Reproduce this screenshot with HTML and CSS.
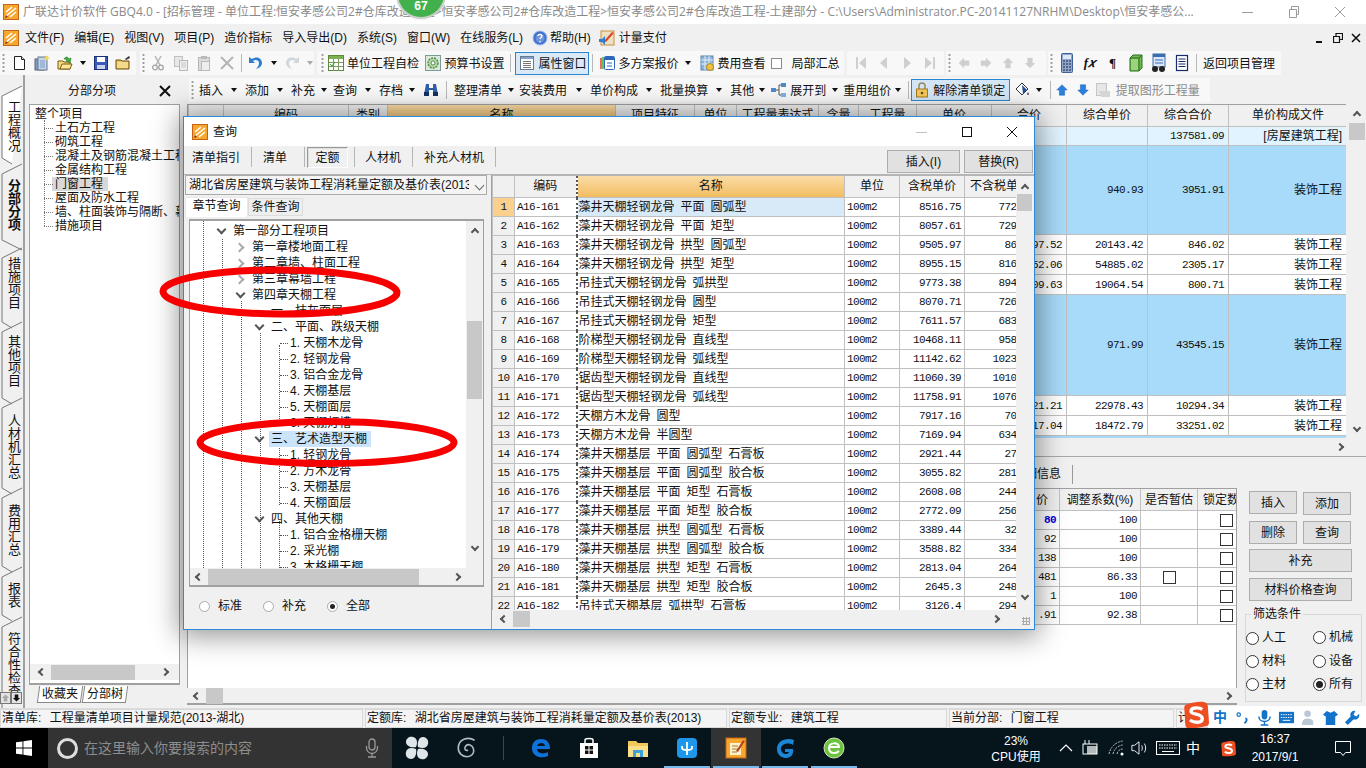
FILE: index.html
```html
<!DOCTYPE html>
<html lang="zh-CN">
<head>
<meta charset="utf-8">
<title>广联达计价软件 GBQ4.0</title>
<link rel="stylesheet" href="styles.css">
</head>
<body>
<svg class="defs" width="0" height="0">
<defs>
<symbol id="logo" viewBox="0 0 16 16"><rect x=".5" y=".5" width="15" height="15" fill="#f7a72c" stroke="#c4641a"/><path d="M3 12 13 4M3 8l6-5M7 13l6-5" stroke="#fff" stroke-width="1.6"/><path d="M2 14l3-1-2-2z" fill="#8a2b12"/></symbol>
<symbol id="doc" viewBox="0 0 16 16"><path d="M3.500 1.500h7l3 3v10h-10z" fill="#fff" stroke="#222"/><path d="M10.500 1.500v3h3" fill="#ddd" stroke="#222"/></symbol>
<symbol id="docs" viewBox="0 0 16 16"><rect x="1" y="4" width="9" height="11" fill="#7f9cc7" stroke="#567"/><rect x="4" y="2" width="9" height="13" fill="#c5d4ea" stroke="#678"/><path d="M6 6h5M6 8h5M6 10h5M6 12h5" stroke="#7f9cc7"/><path d="M13 0l1 2 2 1-2 1-1 2-1-2-2-1 2-1z" fill="#f5d94a"/></symbol>
<symbol id="openf" viewBox="0 0 16 16"><path d="M1 6h5l1 1h6v7H1z" fill="#f7dc7f" stroke="#7a5a10"/><path d="M3 14l2-5h10l-2 5z" fill="#fbe89f" stroke="#7a5a10"/><path d="M7 4c2-3 4-2 5 0l2-1-1 5-4-2 1-1c-1-1-2-1-3-1z" fill="#3fae3c" stroke="#1d7a1c" stroke-width=".6"/></symbol>
<symbol id="save" viewBox="0 0 16 16"><rect x="1.500" y="1.500" width="13" height="13" fill="#3b5bb8" stroke="#1b2f78"/><rect x="4" y="2" width="8" height="5" fill="#fff"/><rect x="4" y="10" width="8" height="4" fill="#c9d2ea"/></symbol>
<symbol id="fold" viewBox="0 0 16 16"><path d="M1 5h5l1 1h7v8H1z" fill="#e9c560" stroke="#6a4d10"/><rect x="2" y="7" width="11" height="6" fill="#f4db8b"/><path d="M10 4l4-3 1 2-4 2z" fill="#333"/></symbol>
<symbol id="cut" viewBox="0 0 16 16"><path d="M5 1l5 9M11 1L6 10" stroke="#b5b5b5" stroke-width="1.500"/><circle cx="5" cy="12.500" r="2.300" fill="none" stroke="#a5a5a5" stroke-width="1.300"/><circle cx="11" cy="12.500" r="2.300" fill="none" stroke="#a5a5a5" stroke-width="1.300"/></symbol>
<symbol id="copy" viewBox="0 0 16 16"><rect x="1.500" y="1.500" width="8" height="10" fill="#e8e8e8" stroke="#c0c0c0"/><rect x="6.500" y="5.500" width="8" height="10" fill="#eee" stroke="#b8b8b8"/><path d="M8 8h5M8 10h5M8 12h5" stroke="#c8c8c8"/></symbol>
<symbol id="paste" viewBox="0 0 16 16"><rect x="2.500" y="2.500" width="11" height="13" fill="#ddd" stroke="#b5b5b5"/><rect x="5" y="1" width="6" height="3" fill="#bbb"/><rect x="5.500" y="6.500" width="8" height="9" fill="#eee" stroke="#bbb"/></symbol>
<symbol id="del" viewBox="0 0 16 16"><path d="M2 2l12 12M14 2L2 14" stroke="#b5b5b5" stroke-width="2"/></symbol>
<symbol id="undo" viewBox="0 0 16 16"><path d="M1 2v6h6L5 6c2-2 6-1 6 2 0 2-1 4-3 6 4-1 6-4 6-6 0-5-6-7-10-4z" fill="#2f7dd1"/></symbol>
<symbol id="redo" viewBox="0 0 16 16"><path d="M15 2v6H9l2-2C9 4 5 5 5 8c0 2 1 4 3 6-4-1-6-4-6-6 0-5 6-7 10-4z" fill="#cfd6dc"/></symbol>
<symbol id="tbl" viewBox="0 0 16 16"><rect x=".5" y=".5" width="15" height="15" fill="#fff" stroke="#5c8a3c"/><rect x="1" y="1" width="14" height="3" fill="#7cb050"/><path d="M1 7.500h14M1 11.500h14M5.500 4v12M10.500 4v12" stroke="#7a9a62"/><path d="M2 9l2 2 3-4" stroke="#2a9a2a" fill="none"/></symbol>
<symbol id="gear" viewBox="0 0 16 16"><rect x=".5" y=".5" width="15" height="15" fill="#dfe9d8" stroke="#7a9a9a"/><circle cx="8" cy="8" r="5" fill="#b6d79f" stroke="#4f8c5c" stroke-dasharray="2 1" stroke-width="1.500"/><circle cx="8" cy="8" r="2" fill="#fff" stroke="#4f8c5c"/></symbol>
<symbol id="prop" viewBox="0 0 16 16"><rect x="1.500" y="1.500" width="13" height="13" fill="#fff" stroke="#6a7a8a"/><rect x="2" y="2" width="12" height="2" fill="#7ea3cf"/><path d="M4 6.500h8M4 8.500h8M4 10.500h8M4 12.500h8" stroke="#777"/></symbol>
<symbol id="multi" viewBox="0 0 16 16"><rect x="1" y="3" width="8" height="11" fill="#e86b5e"/><rect x="3" y="2" width="8" height="12" fill="#6cbf62"/><rect x="5.500" y="1.500" width="10" height="13" rx="1" fill="#fff" stroke="#2d67bd"/><rect x="6" y="2" width="9" height="3" fill="#2d67bd"/><path d="M8 8h5M8 11h5" stroke="#2d67bd"/></symbol>
<symbol id="fee" viewBox="0 0 16 16"><rect x="2" y="1" width="12" height="14" fill="#8fb7dd" stroke="#5a82ad"/><path d="M2 5h12M2 9h12M6 1v14M10 1v14" stroke="#e2edf7"/><circle cx="11" cy="12" r="3.500" fill="#f0c040" stroke="#b08a20"/></symbol>
<symbol id="first" viewBox="0 0 16 16"><path d="M3 2h2v12H3zM13 2v12L6 8z" fill="#cfcfcf"/></symbol>
<symbol id="prev" viewBox="0 0 16 16"><path d="M11 2v12L4 8z" fill="#cfcfcf"/></symbol>
<symbol id="next" viewBox="0 0 16 16"><path d="M5 2v12l7-6z" fill="#cfcfcf"/></symbol>
<symbol id="last" viewBox="0 0 16 16"><path d="M11 2h2v12h-2zM3 2v12l7-6z" fill="#cfcfcf"/></symbol>
<symbol id="al" viewBox="0 0 16 16"><path d="M2 8l6-6v3h6v6H8v3z" fill="#cfcfcf"/></symbol>
<symbol id="ar" viewBox="0 0 16 16"><path d="M14 8L8 2v3H2v6h6v3z" fill="#cfcfcf"/></symbol>
<symbol id="au" viewBox="0 0 16 16"><path d="M8 2l6 6h-3v6H5V8H2z" fill="#cfcfcf"/></symbol>
<symbol id="ad" viewBox="0 0 16 16"><path d="M8 14l6-6h-3V2H5v6H2z" fill="#cfcfcf"/></symbol>
<symbol id="calc" viewBox="0 0 16 20"><rect x="2.500" y=".5" width="11" height="19" rx="1" fill="#8ea8d2" stroke="#3f5f96"/><rect x="4" y="2" width="8" height="4" fill="#dfe8f5"/><path d="M4 8h2M7 8h2M10 8h2M4 11h2M7 11h2M10 11h2M4 14h2M7 14h2M10 14h2M4 17h2M7 17h2M10 17h2" stroke="#223"/></symbol>
<symbol id="box" viewBox="0 0 16 20"><path d="M2 5l3-3h9v13l-3 3H2z" fill="#6fbb4f" stroke="#2c6d24"/><path d="M2 5h9v13M11 5l3-3" stroke="#2c6d24" fill="none"/><path d="M3 6h7v11H3z" fill="#9ed37e"/></symbol>
<symbol id="pic" viewBox="0 0 16 20"><rect x="2" y="1" width="12" height="13" fill="#dce6f5" stroke="#3b6cb0"/><rect x="2" y="1" width="12" height="3" fill="#3b6cb0"/><path d="M4 7h8M4 10h8" stroke="#3b6cb0"/><circle cx="4" cy="16" r="3" fill="#222"/><circle cx="11" cy="16" r="3" fill="#222"/></symbol>
<symbol id="list" viewBox="0 0 16 20"><rect x="2.500" y="2.500" width="11" height="15" fill="#fff" stroke="#1a2a6a" stroke-width="1.200"/><path d="M4.500 6h7M4.500 8.500h7M4.500 11h7M4.500 13.500h7" stroke="#1a2a6a"/></symbol>
<symbol id="bin" viewBox="0 0 16 16"><path d="M3 2h3v4h4V2h3l2 11H10V8H6v5H1z" fill="#2e5fa8"/><rect x="1" y="10" width="5" height="4" fill="#14305f"/><rect x="10" y="10" width="5" height="4" fill="#14305f"/></symbol>
<symbol id="tree" viewBox="0 0 16 16"><rect x="0" y="6" width="5" height="4" fill="#4b8bd0"/><rect x="10" y="1" width="5" height="4" fill="#4b8bd0"/><rect x="10" y="11" width="5" height="4" fill="#7db2e4"/><path d="M5 8h3M8 3v10M8 3h2M8 13h2" stroke="#555" fill="none"/></symbol>
<symbol id="lock" viewBox="0 0 16 16"><path d="M5 7V4a3 3 0 0 1 6 0v3" fill="none" stroke="#9a8a60" stroke-width="1.500"/><rect x="2.500" y="7" width="11" height="8" fill="#f4c95c" stroke="#a87a20"/><circle cx="8" cy="11" r="1.300" fill="#6a4a10"/></symbol>
<symbol id="paint" viewBox="0 0 16 16"><path d="M2 7l6-6 6 6-6 6z" fill="#fff" stroke="#333"/><path d="M8 3l5 5-4 4z" fill="#1f4f9f"/><path d="M14 10c1 2 1 3 0 3s-1-1 0-3z" fill="#222"/></symbol>
<symbol id="up" viewBox="0 0 16 16"><path d="M8 2l6 6h-3v6H5V8H2z" fill="#2a7fe0" stroke="#175a9f" stroke-width=".5"/></symbol>
<symbol id="dn" viewBox="0 0 16 16"><path d="M8 14l6-6h-3V2H5v6H2z" fill="#2a7fe0" stroke="#175a9f" stroke-width=".5"/></symbol>
<symbol id="ext" viewBox="0 0 16 16"><rect x="1.500" y="1.500" width="10" height="12" fill="#e6e6e6" stroke="#c5c5c5"/><path d="M4 9h11v6H6z" fill="#d5d5d5"/></symbol>
<symbol id="help" viewBox="0 0 16 16"><circle cx="8" cy="8" r="7" fill="#3f6fd0" stroke="#9db8ea"/><circle cx="8" cy="8" r="4.500" fill="#fff" opacity=".25"/><path d="M6 6c0-2 4-2 4 0 0 1.500-2 1.500-2 3M8 11v1.500" stroke="#fff" fill="none" stroke-width="1.300"/></symbol>
<symbol id="pay" viewBox="0 0 16 16"><rect x="2" y="1" width="13" height="14" fill="#f0e0c0" stroke="#c78f3c"/><path d="M5 11l8-9 2 1-8 9z" fill="#d9442e"/><path d="M0 9h3l3-3v9l-3-3H0z" fill="#2f7dd1"/></symbol>
<symbol id="win" viewBox="0 0 16 16"><path d="M0 2.300l6.500-.9v6.200H0zM7.400 1.300L16 0v7.600H7.400zM0 8.400h6.500v6.200L0 13.700zM7.400 8.400H16V16l-8.600-1.200z" fill="#fff"/></symbol>
<symbol id="sog" viewBox="0 0 24 24"><path d="M4 3C10 1 16 0 20 1c2 .5 3 2 3 4l1 14c0 2-1 3-3 3.500-6 1.500-11 2-15 1.500-2 0-3-1-3-3L2 6c0-1.500.5-2.500 2-3z" fill="#ee4f22"/><path d="M18 7.500c-3-2-10-2-10 1.500s10 2 10 6.500-7 4-11 1.500" fill="none" stroke="#fff" stroke-width="3"/></symbol>
</defs>
</svg>

<div class="app">
  <header class="titlebar">
    <svg class="i16 ml-tl"><use href="#logo"/></svg>
    <span class="title-text">广联达计价软件 GBQ4.0 - [招标管理 - 单位工程:恒安孝感公司2#仓库改造工程&gt;恒安孝感公司2#仓库改造工程&gt;恒安孝感公司2#仓库改造工程-土建部分 - C:\Users\Administrator.PC-20141127NRHM\Desktop\恒安孝感公...</span>
    <span class="winbtns">
      <svg class="wb" viewBox="0 0 12 12"><path d="M0 6.500h11" stroke="#9a9a9a"/></svg>
      <svg class="wb" viewBox="0 0 12 12"><path d="M1.500 3.500h7v8h-7zM3.500 3V.5h7v8H9" fill="none" stroke="#9a9a9a"/></svg>
      <svg class="wb" viewBox="0 0 12 12"><path d="M1 1l10 10M11 1L1 11" stroke="#9a9a9a"/></svg>
    </span>
  </header>
  <div class="badge">67</div>

  <nav class="menubar">
    <svg class="i16 ml-tl"><use href="#logo"/></svg>
    <span class="mi first">文件(F)</span><span class="mi">编辑(E)</span><span class="mi">视图(V)</span><span class="mi">项目(P)</span><span class="mi">造价指标</span><span class="mi">导入导出(D)</span><span class="mi">系统(S)</span><span class="mi">窗口(W)</span><span class="mi">在线服务(L)</span>
    <svg class="i16 mi-ic"><use href="#help"/></svg><span class="mi tight">帮助(H)</span>
    <svg class="i16 mi-ic2"><use href="#pay"/></svg><span class="mi tight2">计量支付</span>
    <span class="mdi">
      <svg class="mb" viewBox="0 0 10 10"><path d="M1 9h6" stroke="#111" stroke-width="2"/></svg>
      <svg class="mb" viewBox="0 0 10 10"><path d="M.5 3.500h6v6h-6zM3 3V.5h6.500v6H7" fill="none" stroke="#111" stroke-width="1.200"/></svg>
      <svg class="mb" viewBox="0 0 10 10"><path d="M1 1l8 8M9 1L1 9" stroke="#111" stroke-width="1.600"/></svg>
    </span>
  </nav>

  <div class="toolbar">
    <div class="grp g1">
      <span class="grip"></span>
      <svg class="i16 s23"><use href="#doc"/></svg><svg class="i16 s23"><use href="#docs"/></svg><svg class="i16 s23"><use href="#openf"/></svg><span class="caret c14"></span><svg class="i16 s22"><use href="#save"/></svg><svg class="i16 s22"><use href="#fold"/></svg>
    </div>
    <div class="grp g2">
      <span class="grip"></span>
      <svg class="i16 s22"><use href="#cut"/></svg><svg class="i16 s23"><use href="#copy"/></svg><svg class="i16 s23"><use href="#paste"/></svg><svg class="i16 s23"><use href="#del"/></svg><span class="sep"></span><svg class="i16 s22"><use href="#undo"/></svg><span class="caret c14"></span><svg class="i16 s22"><use href="#redo"/></svg><span class="caret c14 dim"></span>
    </div>
    <div class="grp g3">
      <span class="grip"></span>
      <svg class="i16 s19"><use href="#tbl"/></svg><span class="ti ml2">单位工程自检</span>
      <svg class="i16 s19 ml6"><use href="#gear"/></svg><span class="ti ml2">预算书设置</span>
      <span class="sep sepa"></span>
      <span class="hot prop"><svg class="i16"><use href="#prop"/></svg><span class="ti">属性窗口</span></span>
      <span class="sep sepx"></span>
      <svg class="i16 s19"><use href="#multi"/></svg><span class="ti ml2">多方案报价</span><span class="caret c19"></span>
      <svg class="i16 s16"><use href="#fee"/></svg><span class="ti ml2">费用查看</span><span class="chk"></span><span class="ti ml10">局部汇总</span>
    </div>
    <div class="grp g4">
      <svg class="i16 s23"><use href="#first"/></svg><svg class="i16 s23"><use href="#prev"/></svg><svg class="i16 s23"><use href="#next"/></svg><svg class="i16 s23"><use href="#last"/></svg>
    </div>
    <div class="grp g5">
      <span class="grip"></span>
      <svg class="i14 s22"><use href="#al"/></svg><svg class="i14 s22"><use href="#ar"/></svg><svg class="i14 s22"><use href="#au"/></svg><svg class="i14 s22"><use href="#ad"/></svg>
    </div>
    <div class="grp g6">
      <span class="grip"></span>
      <svg class="i20 s23"><use href="#calc"/></svg><span class="fx s23">f𝑥</span><span class="pil s23">¶</span><svg class="i20 s23"><use href="#box"/></svg><svg class="i20 s23"><use href="#pic"/></svg><svg class="i20 s23"><use href="#list"/></svg>
      <span class="sep"></span><span class="ti ml3">返回项目管理</span>
    </div>
  </div>

  <div class="work">
    <aside class="rail">
      <svg class="rail-lines" viewBox="0 0 25 633" width="25" height="633">
        <path d="M24 0V633" stroke="#a0a0a0" stroke-width="2"/>
        <path d="M22 11 2 21V83l10 6" fill="#fff" stroke="#777"/>
        <path d="M22 89 2 99V165l20 10" fill="#f0f0f0" stroke="#777"/>
        <path d="M22 173 2 183V247l10 6M22 247 2 257V323l10 6M22 323 2 333V413l10 6M22 413 2 423V491l10 6M22 492 2 502V540l10 6M22 542 2 552V633" fill="none" stroke="#777"/>
      </svg>
      <div class="rt t1">工程概况</div>
      <div class="rt t2 on">分部分项</div>
      <div class="rt t3">措施项目</div>
      <div class="rt t4">其他项目</div>
      <div class="rt t5">人材机汇总</div>
      <div class="rt t6">费用汇总</div>
      <div class="rt t7">报表</div>
      <div class="rt t8">符合性检查</div>
      <div class="railbtns"><span class="rb"><svg viewBox="0 0 10 10"><path d="M5 1l4 4H7v4H3V5H1z" fill="#a8a8a8"/></svg></span><span class="rb"><svg viewBox="0 0 10 10"><path d="M5 9l4-4H7V1H3v4H1z" fill="#111"/></svg></span></div>
    </aside>

    <section class="leftpane">
      <div class="lp-head"><span class="lp-title">分部分项</span><svg class="lp-x" viewBox="0 0 12 12"><path d="M1 1l10 10M11 1L1 11" stroke="#111" stroke-width="2"/></svg></div>
      <div class="lp-tree">
        <ul class="ltree">
          <li class="root">整个项目</li>
          <li>土石方工程</li><li>砌筑工程</li><li>混凝土及钢筋混凝土工程</li><li>金属结构工程</li><li><span class="sel">门窗工程</span></li><li>屋面及防水工程</li><li>墙、柱面装饰与隔断、幕墙工程</li><li>措施项目</li>
        </ul>
        <div class="hs lp-hs"><i class="ar-l"></i><b class="th84"></b><i class="ar-r"></i></div>
      </div>
      <div class="lp-tabs"><span class="lt">收藏夹</span><span class="lt">分部树</span></div>
    </section>

    <section class="rightpane">
      <div class="toolbar2">
        <span class="grip"></span>
        <span class="ti ml3">插入</span><span class="caret c22"></span><span class="ti">添加</span><span class="caret c22"></span><span class="ti">补充</span><span class="caret c18"></span><span class="ti">查询</span><span class="caret c22"></span><span class="ti">存档</span><span class="caret c18"></span><svg class="i16 ml2"><use href="#bin"/></svg><span class="sep sep8"></span>
        <span class="ti">整理清单</span><span class="caret c17"></span><span class="ti">安装费用</span><span class="caret c23"></span><span class="ti">单价构成</span><span class="caret c22"></span><span class="ti">批量换算</span><span class="caret c22"></span><span class="ti">其他</span><span class="caret c15"></span>
        <svg class="i16 ml2"><use href="#tree"/></svg><span class="ti ml3">展开到</span><span class="caret c17"></span><span class="ti">重用组价</span><span class="caret c14"></span><span class="sep sep2"></span>
        <span class="hot lockb"><svg class="i16"><use href="#lock"/></svg><span class="ti">解除清单锁定</span></span>
        <svg class="i16 ml4"><use href="#paint"/></svg><span class="caret c18"></span><span class="sep sep3"></span>
        <svg class="i14 s21 ml4"><use href="#up"/></svg><svg class="i14 s21"><use href="#dn"/></svg><svg class="i16 s22 ml1"><use href="#ext"/></svg><span class="ti dimt ml2">提取图形工程量</span>
      </div>

      <div class="gridwrap">
        <div class="maingrid">
          <table class="mt">
            <colgroup><col class="m1"><col class="m2"><col class="m3"><col class="m4"><col class="m5"><col class="m6"><col class="m7"><col class="m8"><col class="m9"><col class="m10"><col class="m11"><col class="m12"><col class="m13"><col class="m14"></colgroup>
            <thead><tr class="h21"><th></th><th>编码</th><th>类别</th><th class="orange">名称</th><th>项目特征</th><th>单位</th><th>工程量表达式</th><th>含量</th><th>工程量</th><th>单价</th><th>合价</th><th>综合单价</th><th>综合合价</th><th>单价构成文件</th></tr></thead>
            <tbody>
              <tr class="h19 pale"><td colspan="11"></td><td></td><td class="n">137581.09</td><td class="r">[房屋建筑工程]</td></tr>
              <tr class="h89 blue"><td colspan="11"></td><td class="n">940.93</td><td class="n">3951.91</td><td class="r">装饰工程</td></tr>
              <tr class="h20"><td colspan="10"></td><td class="n">97.52</td><td class="n">20143.42</td><td class="n">846.02</td><td class="r">装饰工程</td></tr>
              <tr class="h20"><td colspan="10"></td><td class="n">52.06</td><td class="n">54885.02</td><td class="n">2305.17</td><td class="r">装饰工程</td></tr>
              <tr class="h20"><td colspan="10"></td><td class="n">09.63</td><td class="n">19064.54</td><td class="n">800.71</td><td class="r">装饰工程</td></tr>
              <tr class="h101 blue"><td colspan="11"></td><td class="n">971.99</td><td class="n">43545.15</td><td class="r">装饰工程</td></tr>
              <tr class="h20"><td colspan="10"></td><td class="n">21.21</td><td class="n">22978.43</td><td class="n">10294.34</td><td class="r">装饰工程</td></tr>
              <tr class="h20"><td colspan="10"></td><td class="n">17.04</td><td class="n">18472.79</td><td class="n">33251.02</td><td class="r">装饰工程</td></tr>
              <tr class="h20 blue"><td colspan="14"></td></tr>
            </tbody>
          </table>
        </div>
        <div class="vs main-vs"><i class="ar-u"></i><b class="thv17"></b><i class="ar-d"></i></div>
      </div>
      <div class="hs main-hs"><i class="ar-r"></i></div>

      <div class="lower">
        <div class="lower-left">
          <div class="ltabs"><span class="ltab">明细信息</span></div>
          <div class="ltable">
            <table class="lt-t">
              <colgroup><col class="l1"><col class="l2"><col class="l3"><col class="l4"><col class="l5"></colgroup>
              <thead><tr><th></th><th class="ralign">价</th><th>调整系数(%)</th><th>是否暂估</th><th class="clipth">锁定数量</th></tr></thead>
              <tbody>
                <tr><td></td><td class="n bl">80</td><td class="n">100</td><td></td><td class="cc"><span class="cb"></span></td></tr>
                <tr><td></td><td class="n">92</td><td class="n">100</td><td></td><td class="cc"><span class="cb"></span></td></tr>
                <tr><td></td><td class="n">138</td><td class="n">100</td><td></td><td class="cc"><span class="cb"></span></td></tr>
                <tr><td></td><td class="n">481</td><td class="n">86.33</td><td class="cm"><span class="cb"></span></td><td class="cc"><span class="cb"></span></td></tr>
                <tr><td></td><td class="n">1</td><td class="n">100</td><td></td><td class="cc"><span class="cb"></span></td></tr>
                <tr><td></td><td class="n">.91</td><td class="n">92.38</td><td></td><td class="cc"><span class="cb"></span></td></tr>
              </tbody>
            </table>
          </div>
          <div class="hs low-hs"><i class="ar-l"></i><b class="th17"></b><i class="ar-r"></i></div>
        </div>
        <div class="side">
          <div class="brow b1"><button class="btn w48">插入</button><button class="btn w48 dn1">添加</button></div>
          <div class="brow b2"><button class="btn w48">删除</button><button class="btn w48">查询</button></div>
          <button class="btn wide b3">补充</button>
          <button class="btn wide b4">材料价格查询</button>
          <fieldset class="filter">
            <legend>筛选条件</legend>
            <label class="rd"><span class="radio"></span>人工</label><label class="rd up1"><span class="radio"></span>机械</label>
            <label class="rd"><span class="radio"></span>材料</label><label class="rd"><span class="radio"></span>设备</label>
            <label class="rd"><span class="radio"></span>主材</label><label class="rd"><span class="radio on"></span>所有</label>
          </fieldset>
        </div>
      </div>
    </section>
  </div>

  <footer class="statusbar">
    <span class="sc s1">清单库: 工程量清单项目计量规范(2013-湖北)</span>
    <span class="sc s2">定额库: 湖北省房屋建筑与装饰工程消耗量定额及基价表(2013)</span>
    <span class="sc s3">定额专业: 建筑工程</span>
    <span class="sc s4">当前分部: 门窗工程</span>
    <span class="sc s5">计</span>
  </footer>

  <div class="taskbar">
    <span class="start"><svg class="i16"><use href="#win"/></svg></span>
    <span class="search">
      <span class="cortana"></span>
      <span class="search-text">在这里输入你要搜索的内容</span>
      <svg class="mic" viewBox="0 0 14 20"><rect x="4" y="1" width="6" height="11" rx="3" fill="none" stroke="#999" stroke-width="1.300"/><path d="M1.500 8v2a5.500 5.500 0 0 0 11 0V8M7 16v3M3 19h8" fill="none" stroke="#999" stroke-width="1.300"/></svg>
    </span>
    <span class="tk tk-a"><svg viewBox="0 0 24 24" class="i22"><g fill="#dfe6ea"><path d="M11 11C6 12 1 10 1 6c0-4 4-6 7-5 4 1 5 5 3 10z"/><path d="M13 11c-1-5 1-10 5-10 4 0 6 4 5 7-1 4-5 5-10 3z"/><path d="M13 13c5-1 10 1 10 5 0 4-4 6-7 5-4-1-5-5-3-10z"/><path d="M11 13c1 5-1 10-5 10-4 0-6-4-5-7 1-4 5-5 10-3z"/></g></svg></span>
    <span class="tk tk-a"><svg viewBox="0 0 22 22" class="i22"><path d="M18 4C12 0 3 3 3 11c0 5 4 8 8 8s7-3 6-7-5-5-7-3-1 5 2 4" fill="none" stroke="#b5bcc0" stroke-width="1.500"/></svg></span>
    <span class="tsep"></span>
    <span class="tk"><svg viewBox="0 0 22 22" class="i24"><path d="M3 11C3 5 7 2 12 2c6 0 9 4 9 10H8c0 4 6 6 11 3v4c-7 3-16 1-16-8zm5-2h8c0-4-7-4-8 0z" fill="#0d72d9"/></svg></span>
    <span class="tk"><svg viewBox="0 0 22 22" class="i24"><path d="M2 6h18v15H2z" fill="#fff"/><path d="M7 6V3c0-2 8-2 8 0v3" fill="none" stroke="#fff" stroke-width="1.500"/><path d="M7 9h3.500v3.500H7zM11.500 9H15v3.500h-3.500zM7 13.500h3.500V17H7zM11.500 13.500H15V17h-3.500z" fill="#111"/></svg></span>
    <span class="tk"><svg viewBox="0 0 22 22" class="i24"><path d="M1 4h8l2 2h10v14H1z" fill="#f1c75a"/><path d="M1 9h20v11H1z" fill="#fbe08a"/><path d="M6 13h10v7H6z" fill="#3aa2dd"/><path d="M9 16h4v4H9z" fill="#fbe08a"/></svg></span>
    <span class="tk run"><svg viewBox="0 0 22 22" class="i24"><rect x="1" y="1" width="20" height="20" rx="4" fill="#1e96ea"/><path d="M11 5v13M6 9v2c0 2 2 2 5 2s5 0 5-2V9M6 9h.1M16 9h.1" stroke="#fff" fill="none" stroke-width="1.800"/></svg></span>
    <span class="tk run act"><svg viewBox="0 0 22 22" class="i24"><rect x="1" y="1" width="20" height="20" fill="#f7a72c" stroke="#c4641a"/><rect x="5" y="6" width="11" height="12" fill="#fdf1cf"/><path d="M7 9h6M7 12h6M7 15h5" stroke="#a87a20"/><path d="M11 14l7-11 2 1-7 11z" fill="#b8471e"/></svg></span>
    <span class="tk run"><svg viewBox="0 0 22 22" class="i24"><path d="M20 3c-7-3-17 0-17 9 0 7 6 9 9 9 5 0 8-4 7-9h-8v3h4c-1 3-7 3-8-2-1-6 7-8 12-5z" fill="#1c86d6"/></svg></span>
    <span class="tk run"><svg viewBox="0 0 22 22" class="i24"><circle cx="11" cy="11" r="10" fill="#6cc33f" stroke="#cfe9b8"/><path d="M6 10h10c0-5-10-5-10 1s7 6 10 3" fill="none" stroke="#fff" stroke-width="2"/></svg></span>
    <span class="cpu"><span>23%</span><span>CPU使用</span></span>
    <span class="tray">
      <svg class="tr1" viewBox="0 0 14 10"><path d="M1 8l6-6 6 6" fill="none" stroke="#fff" stroke-width="1.200"/></svg>
      <svg class="tr2" viewBox="0 0 18 16"><rect x="2" y="4" width="14" height="10" fill="none" stroke="#fff"/><rect x="6" y="6" width="10" height="8" fill="#fff" opacity=".7"/><path d="M4 0v4M8 0v4" stroke="#fff"/></svg>
      <svg class="tr3" viewBox="0 0 18 16"><path d="M1 14a16 16 0 0 1 14-13M5 14a11 11 0 0 1 10-9M9 14a6 6 0 0 1 6-5" fill="none" stroke="#c5c5c5" stroke-dasharray="2 1"/><circle cx="14" cy="14" r="1.500" fill="#fff"/></svg>
      <svg class="tr4" viewBox="0 0 18 16"><path d="M1 5h3l5-4v14l-5-4H1z" fill="none" stroke="#fff"/><path d="M12 5c1 2 1 4 0 6M15 3c2 3 2 7 0 10" fill="none" stroke="#fff"/></svg>
      <svg class="tr5" viewBox="0 0 24 14"><rect x=".5" y=".5" width="23" height="13" fill="none" stroke="#fff"/><path d="M3 4h18M3 7h18" stroke="#fff" stroke-dasharray="1.500 1"/><path d="M6 10.500h12" stroke="#fff"/></svg>
      <span class="zh">中</span>
      <svg class="tr6" viewBox="0 0 24 24"><use href="#sog"/></svg>
      <span class="clock"><span>16:37</span><span>2017/9/1</span></span>
      <svg class="tr7" viewBox="0 0 16 16"><path d="M.5 1.500h15v11h-5l-2.500 3-2.500-3h-5z" fill="none" stroke="#fff"/></svg>
    </span>
  </div>
</div>

<div class="ime">
  <svg class="ime-logo" viewBox="0 0 24 24"><use href="#sog"/></svg>
  <span class="ime-bar">
    <span class="ime-zh">中</span>
    <svg class="ime-i" viewBox="0 0 18 18"><circle cx="5" cy="6" r="1.800" fill="none" stroke="#1373c8" stroke-width="1.300"/><path d="M12 10c2 0 2 3-1 5" stroke="#1373c8" stroke-width="2" fill="none"/></svg>
    <svg class="ime-i" viewBox="0 0 18 18"><rect x="6" y="1" width="6" height="10" rx="3" fill="#1373c8"/><path d="M3 8c0 7 12 7 12 0M9 13v4M5 17h8" fill="none" stroke="#1373c8" stroke-width="1.500"/></svg>
    <svg class="ime-i" viewBox="0 0 18 18"><rect x="1" y="3" width="16" height="12" fill="#1373c8"/><path d="M3 6h12M3 9h12" stroke="#fff" stroke-dasharray="1.500 1"/><path d="M5 12h8" stroke="#fff"/></svg>
    <svg class="ime-i" viewBox="0 0 18 18"><circle cx="8" cy="5" r="3.500" fill="#b9c7d6"/><path d="M2 17c0-6 3-7 6-7s5 1 6 3v4z" fill="#b9c7d6"/></svg>
    <svg class="ime-i" viewBox="0 0 18 18"><path d="M5 2l4 2 4-2 4 4-3 2v9H4V8L1 6z" fill="#1373c8"/></svg>
    <svg class="ime-i" viewBox="0 0 18 18"><path d="M16 5l-3 3-3-2 2-4C8 1 6 5 7 8l-6 6 3 3 6-6c4 1 7-2 6-6z" fill="#1373c8"/></svg>
  </span>
</div>

<section class="dialog">
  <div class="dlg-title">
    <svg class="i16 dlg-ic"><use href="#logo"/></svg><span class="dlg-name">查询</span>
    <span class="dlg-ctl">
      <svg class="dw" viewBox="0 0 12 12"><path d="M0 6.500h11" stroke="#c0c0c0"/></svg>
      <svg class="dw" viewBox="0 0 12 12"><rect x="1.500" y="1.500" width="9" height="9" fill="none" stroke="#111"/></svg>
      <svg class="dw" viewBox="0 0 12 12"><path d="M1 1l10 10M11 1L1 11" stroke="#111"/></svg>
    </span>
  </div>
  <div class="dlg-tabs">
    <span class="dtab">清单指引</span><span class="dsep"></span>
    <span class="dtab">清单</span><span class="dsep"></span>
    <span class="dtab cur">定额</span><span class="dsep"></span>
    <span class="dtab">人材机</span><span class="dsep"></span>
    <span class="dtab">补充人材机</span><span class="dsep"></span>
    <button class="btn dbtn ins">插入(I)</button><button class="btn dbtn">替换(R)</button>
  </div>
  <div class="dlg-body">
    <div class="dl">
      <div class="combo"><span class="combo-t">湖北省房屋建筑与装饰工程消耗量定额及基价表(2013)</span><i class="ar-d"></i></div>
      <div class="subtabs"><span class="st on">章节查询</span><span class="st">条件查询</span></div>
      <div class="treebox">
        <div class="tree-area">
          <div class="tree-clip">
            <span class="vg v1"></span><span class="vg v2"></span><span class="vg v3"></span><span class="vg v4"></span><span class="vg v5"></span><span class="vg v5b"></span><span class="vg v5c"></span>
            <div class="tr lv1"><i class="ar-d"></i>第一部分工程项目</div>
            <div class="tr lv2"><i class="ar-r"></i>第一章楼地面工程</div>
            <div class="tr lv2"><i class="ar-r"></i>第二章墙、柱面工程</div>
            <div class="tr lv2"><i class="ar-r"></i>第三章幕墙工程</div>
            <div class="tr lv2"><i class="ar-d"></i>第四章天棚工程</div>
            <div class="tr lv3 leaf3">一、抹灰面层</div>
            <div class="tr lv3"><i class="ar-d"></i>二、平面、跌级天棚</div>
            <div class="tr lv4">1. 天棚木龙骨</div>
            <div class="tr lv4">2. 轻钢龙骨</div>
            <div class="tr lv4">3. 铝合金龙骨</div>
            <div class="tr lv4">4. 天棚基层</div>
            <div class="tr lv4">5. 天棚面层</div>
            <div class="tr lv4">6. 天棚灯槽</div>
            <div class="tr lv3"><i class="ar-d"></i><span class="trsel">三、艺术造型天棚</span></div>
            <div class="tr lv4">1. 轻钢龙骨</div>
            <div class="tr lv4">2. 方木龙骨</div>
            <div class="tr lv4">3. 天棚基层</div>
            <div class="tr lv4">4. 天棚面层</div>
            <div class="tr lv3"><i class="ar-d"></i>四、其他天棚</div>
            <div class="tr lv4">1. 铝合金格栅天棚</div>
            <div class="tr lv4">2. 采光棚</div>
            <div class="tr lv4">3. 木格栅天棚</div>
          </div>
          <div class="vs tree-vs"><i class="ar-u"></i><b class="thv78"></b><i class="ar-d"></i></div>
        </div>
        <div class="hs tree-hs"><i class="ar-l"></i><b class="th211"></b><i class="ar-r"></i></div>
      </div>
      <div class="radios">
        <label class="rd2"><span class="radio grey"></span>标准</label>
        <label class="rd2"><span class="radio grey"></span>补充</label>
        <label class="rd2"><span class="radio grey on"></span>全部</label>
      </div>
    </div>
    <div class="dr">
      <div class="dgrid">
        <div class="dgrid-clip">
          <table class="dt">
            <colgroup><col class="d1"><col class="d2"><col class="d3"><col class="d4"><col class="d5"><col class="d6"></colgroup>
            <thead><tr><th></th><th>编码</th><th class="orange grab">名称</th><th>单位</th><th>含税单价</th><th class="clipth">不含税单价</th></tr></thead>
            <tbody>
              <tr class="cur-row"><th>1</th><td class="m">A16-161</td><td class="nm">藻井天棚轻钢龙骨 平面 圆弧型</td><td class="m">100m2</td><td class="n">8516.75</td><td class="n">772</td></tr>
              <tr><th>2</th><td class="m">A16-162</td><td class="nm">藻井天棚轻钢龙骨 平面 矩型</td><td class="m">100m2</td><td class="n">8057.61</td><td class="n">729</td></tr>
              <tr><th>3</th><td class="m">A16-163</td><td class="nm">藻井天棚轻钢龙骨 拱型 圆弧型</td><td class="m">100m2</td><td class="n">9505.97</td><td class="n">86</td></tr>
              <tr><th>4</th><td class="m">A16-164</td><td class="nm">藻井天棚轻钢龙骨 拱型 矩型</td><td class="m">100m2</td><td class="n">8955.15</td><td class="n">816</td></tr>
              <tr><th>5</th><td class="m">A16-165</td><td class="nm">吊挂式天棚轻钢龙骨 弧拱型</td><td class="m">100m2</td><td class="n">9773.38</td><td class="n">894</td></tr>
              <tr><th>6</th><td class="m">A16-166</td><td class="nm">吊挂式天棚轻钢龙骨 圆型</td><td class="m">100m2</td><td class="n">8070.71</td><td class="n">726</td></tr>
              <tr><th>7</th><td class="m">A16-167</td><td class="nm">吊挂式天棚轻钢龙骨 矩型</td><td class="m">100m2</td><td class="n">7611.57</td><td class="n">683</td></tr>
              <tr><th>8</th><td class="m">A16-168</td><td class="nm">阶梯型天棚轻钢龙骨 直线型</td><td class="m">100m2</td><td class="n">10468.11</td><td class="n">958</td></tr>
              <tr><th>9</th><td class="m">A16-169</td><td class="nm">阶梯型天棚轻钢龙骨 弧线型</td><td class="m">100m2</td><td class="n">11142.62</td><td class="n">1023</td></tr>
              <tr><th>10</th><td class="m">A16-170</td><td class="nm">锯齿型天棚轻钢龙骨 直线型</td><td class="m">100m2</td><td class="n">11060.39</td><td class="n">1010</td></tr>
              <tr><th>11</th><td class="m">A16-171</td><td class="nm">锯齿型天棚轻钢龙骨 弧线型</td><td class="m">100m2</td><td class="n">11758.91</td><td class="n">1076</td></tr>
              <tr><th>12</th><td class="m">A16-172</td><td class="nm">天棚方木龙骨 圆型</td><td class="m">100m2</td><td class="n">7917.16</td><td class="n">70</td></tr>
              <tr><th>13</th><td class="m">A16-173</td><td class="nm">天棚方木龙骨 半圆型</td><td class="m">100m2</td><td class="n">7169.94</td><td class="n">634</td></tr>
              <tr><th>14</th><td class="m">A16-174</td><td class="nm">藻井天棚基层 平面 圆弧型 石膏板</td><td class="m">100m2</td><td class="n">2921.44</td><td class="n">27</td></tr>
              <tr><th>15</th><td class="m">A16-175</td><td class="nm">藻井天棚基层 平面 圆弧型 胶合板</td><td class="m">100m2</td><td class="n">3055.82</td><td class="n">281</td></tr>
              <tr><th>16</th><td class="m">A16-176</td><td class="nm">藻井天棚基层 平面 矩型 石膏板</td><td class="m">100m2</td><td class="n">2608.08</td><td class="n">244</td></tr>
              <tr><th>17</th><td class="m">A16-177</td><td class="nm">藻井天棚基层 平面 矩型 胶合板</td><td class="m">100m2</td><td class="n">2772.09</td><td class="n">256</td></tr>
              <tr><th>18</th><td class="m">A16-178</td><td class="nm">藻井天棚基层 拱型 圆弧型 石膏板</td><td class="m">100m2</td><td class="n">3389.44</td><td class="n">32</td></tr>
              <tr><th>19</th><td class="m">A16-179</td><td class="nm">藻井天棚基层 拱型 圆弧型 胶合板</td><td class="m">100m2</td><td class="n">3588.82</td><td class="n">334</td></tr>
              <tr><th>20</th><td class="m">A16-180</td><td class="nm">藻井天棚基层 拱型 矩型 石膏板</td><td class="m">100m2</td><td class="n">2813.04</td><td class="n">264</td></tr>
              <tr><th>21</th><td class="m">A16-181</td><td class="nm">藻井天棚基层 拱型 矩型 胶合板</td><td class="m">100m2</td><td class="n">2645.3</td><td class="n">248</td></tr>
              <tr><th>22</th><td class="m">A16-182</td><td class="nm">吊挂式天棚基层 弧拱型 石膏板</td><td class="m">100m2</td><td class="n">3126.4</td><td class="n">294</td></tr>
            </tbody>
          </table>
        </div>
        <div class="vs d-vs"><i class="ar-u"></i><b class="thv16"></b><i class="ar-d"></i></div>
      </div>
      <div class="hs d-hs"><i class="ar-l"></i><b class="th17"></b><i class="ar-r"></i><span class="resize"></span></div>
    </div>
  </div>
</section>

<svg class="circles" viewBox="0 0 1366 768" width="1366" height="768">
  <ellipse cx="280" cy="292" rx="117" ry="22" fill="none" stroke="#f60000" stroke-width="7" transform="rotate(0.300 280 292)"/>
  <ellipse cx="327" cy="442.500" rx="127" ry="21" fill="none" stroke="#f60000" stroke-width="7"/>
</svg>
</body>
</html>
```
FILE: styles.css
```css
* { box-sizing: border-box; }
html, body { margin: 0; height: 768px; overflow: hidden; }
body {
  width: 1366px; position: relative; background: #f0f0f0; color: #111;
  font: 12px/16px "Liberation Sans", "Noto Sans CJK SC", sans-serif;
}
.defs { position: absolute; }
svg { display: block; flex: none; }
.app { display: flex; flex-direction: column; height: 768px; }
.i14 { width: 14px; height: 14px; }
.i16 { width: 16px; height: 16px; }
.i20 { width: 16px; height: 20px; }
.i22 { width: 24px; height: 24px; }
.i24 { width: 22px; height: 22px; }

/* title + menu */
.titlebar { height: 24px; flex: none; background: #fff; display: flex; align-items: center; color: #8a8a8a; }
.ml-tl { margin-left: 3px; }
.title-text { margin-left: 4px; white-space: nowrap; font-family: "Open Sans", "Noto Sans CJK SC", sans-serif; }
.winbtns { margin-left: auto; display: flex; margin-right: 20px; gap: 34px; }
.wb { width: 12px; height: 12px; }
.badge {
  position: absolute; left: 398px; top: -29px; width: 46px; height: 46px; border-radius: 50%;
  background: #42b04c; color: #fff; font-weight: 700; text-align: center; padding-top: 27px; line-height: 16px;
  box-shadow: 0 0 0 2px #c8cfc8, 0 1px 3px rgba(0,0,0,.4);
}
.menubar { height: 26px; flex: none; display: flex; align-items: center; padding-top: 1px; position: relative; }
.mi { margin-left: 10px; white-space: nowrap; }
.mi.first { margin-left: 6px; }
.mi.tight { margin-left: 2px; }
.mi.tight2 { margin-left: 4px; }
.mi-ic { margin-left: 9px; }
.mi-ic2 { margin-left: 8px; }
.mdi { margin-left: auto; display: flex; gap: 8px; margin-right: 5px; }
.mb { width: 10px; height: 10px; }

/* toolbars */
.toolbar { height: 25px; flex: none; display: flex; gap: 3px; padding-top: 1px; }
.grp { display: flex; align-items: center; height: 24px; background: #f8f8f8; border-radius: 2px; }
.g1 { width: 136px; margin-right: -1px; }
.g2 { width: 174px; margin-left: 2px; }
.g3 { width: 527px; padding-left: 2px; }
.g4 { width: 97px; padding-left: 2px; }
.g5 { width: 100px; margin-left: -1px; }
.g6 { width: 233px; margin-left: -1px; }
.grip { width: 7px; height: 20px; flex: none; background: radial-gradient(circle at 50% 50%, #9a9a9a 1px, transparent 1.2px) 0 0 / 7px 4px repeat-y; }
.s16 { width: 16px; margin: 0 1px; }
.s19 { padding: 0; width: 16px; margin: 0 1.500px; }
.s21 { width: 14px; margin: 0 3.500px; }
.s22 { margin: 0 3px; }
.s23 { margin: 0 3.500px; }
.i14.s22 { margin: 0 4px; }
.fx, .pil { width: 16px; text-align: center; font-weight: 700; color: #111; font-size: 13px; font-family: "Liberation Serif", serif; }
.fx { font-style: italic; }
.ti { white-space: nowrap; flex: none; margin-top: 2px; }
.dimt { color: #8a8a8a; }
.ml1 { margin-left: 1px; } .ml2 { margin-left: 2px; } .ml3 { margin-left: 3px; } .ml4 { margin-left: 4px; } .ml10 { margin-left: 10px; }
.s19.ml6 { margin-left: 6px; }
.sep { width: 1px; height: 18px; background: #b8b8b8; margin: 0 3px; flex: none; }
.sepa { margin: 0 4px 0 5px; }
.sepx { margin: 0 5px 0 3px; }
.sep8 { margin: 0 7px 0 7px; }
.sep2 { margin: 0 2px 0 3px; }
.sep3 { margin: 0 0 0 2px; }
.caret { flex: none; height: 4px; position: relative; }
.caret::after { content: ""; position: absolute; left: 50%; top: 0; margin-left: -3px; border: 3px solid transparent; border-top: 4px solid #111; border-bottom: 0; }
.caret.dim::after { border-top-color: #aaa; }
.c14 { width: 14px; } .c15 { width: 15px; } .c17 { width: 17px; } .c18 { width: 18px; } .c19 { width: 19px; } .c22 { width: 22px; } .c23 { width: 23px; }
.hot { display: flex; align-items: center; flex: none; background: #d9e9f7; border: 1px solid #2a86d0; height: 23px; }
.prop { width: 74px; padding-left: 3px; gap: 4px; }
.lockb { width: 99px; height: 22px; padding-left: 2px; gap: 3px; background: #d4e6f6; }
.chk { width: 11px; height: 11px; border: 1px solid #8a8a8a; background: #fff; margin-left: 5px; flex: none; }

/* work */
.work { height: 633px; flex: none; display: flex; }
.rail { width: 25px; flex: none; position: relative; overflow: hidden; }
.rail-lines { position: absolute; left: 0; top: 0; }
.rt { position: absolute; left: 3px; width: 20px; writing-mode: vertical-rl; text-orientation: upright; font-size: 13px; line-height: 20px; letter-spacing: 0; }
.rt.on { font-weight: 700; }
.t1 { top: 25px; } .t2 { top: 104px; } .t3 { top: 182px; } .t4 { top: 260px; } .t5 { top: 339px; } .t6 { top: 429px; } .t7 { top: 507px; } .t8 { top: 557px; }
.railbtns { position: absolute; left: 0; top: 617px; display: flex; background: #777; }
.rb { width: 11px; height: 12px; background: #e4e4e4; border: 1px solid #777; }
.rb svg { width: 9px; height: 10px; }
.leftpane { width: 156px; flex: none; display: flex; flex-direction: column; padding-left: 4px; }
.lp-head { height: 29px; display: flex; align-items: center; position: relative; flex: none; padding: 2px 10px 0 39px; justify-content: space-between; }
.lp-title { white-space: nowrap; }
.lp-x { width: 12px; height: 12px; }
.lp-tree { height: 581px; flex: none; background: #fff; border: 1px solid #a0a0a0; border-bottom-width: 2px; display: flex; flex-direction: column; width: 151px; }
.ltree { flex: 1; list-style: none; margin: 0; padding: 2px 0 0 5px; overflow: hidden; position: relative; }
.ltree::before { content: ""; position: absolute; left: 14px; top: 15px; height: 106px; border-left: 1px dotted #777; }
.ltree li { height: 14px; line-height: 14px; padding-left: 20px; white-space: nowrap; position: relative; margin: 0; }
.ltree li.root { padding-left: 0; }
.ltree li:not(.root)::before { content: ""; position: absolute; left: 9px; top: 7px; width: 9px; border-top: 1px dotted #777; }
.sel { background: #d8d8d8; display: inline-block; margin-left: -3px; padding: 0 5px 0 3px; }
.lp-tabs { height: 20px; flex: none; display: flex; padding: 1px 0 0 9px; gap: 1px; }
.lt { width: 44px; text-align: center; height: 17px; position: relative; z-index: 0; white-space: nowrap; }
.lt::before { content: ""; position: absolute; inset: 0; z-index: -1; background: #fff; border: 1px solid #888; border-top: 0; transform: skewX(-8deg); }

/* scrollbars */
.hs { display: flex; align-items: center; background: #f0f0f0; position: relative; flex: none; }
.vs { display: flex; flex-direction: column; align-items: center; background: #f0f0f0; flex: none; position: relative; }
.ar-l, .ar-r, .ar-u, .ar-d { display: inline-block; width: 6px; height: 6px; border: solid #555; border-width: 2px 0 0 2px; flex: none; }
.ar-l { transform: rotate(-45deg); }
.ar-r { transform: rotate(135deg); }
.ar-u { transform: rotate(45deg); }
.ar-d { transform: rotate(225deg); }
.hs b, .vs b { background: #c8c8c8; display: block; flex: none; }
.lp-hs { height: 16px; margin-bottom: 3px; padding: 0 2px 0 9px; }
.lp-hs .ar-r { margin-left: auto; margin-right: 9px; }
.th84 { width: 84px; height: 15px; margin-left: 6px; }
.th17 { width: 17px; height: 16px; margin-left: 6px; }
.th211 { width: 211px; height: 16px; margin-left: 6px; }
.thv17 { width: 16px; height: 17px; margin-top: 5px; }
.thv16 { width: 15px; height: 17px; margin-top: 3px; }
.thv78 { width: 15px; height: 78px; margin-top: 86px; }

/* right pane */
.rightpane { width: 1179px; flex: none; margin-left: 6px; display: flex; flex-direction: column; }
.toolbar2 { height: 24px; margin: 3px 0 2px 2px; width: 1021px; flex: none; display: flex; align-items: center; background: #f8f8f8; }
.gridwrap { height: 334px; display: flex; flex: none; }
.maingrid { width: 1160px; background: #fff; border: 1px solid #a0a0a0; border-bottom: 0; border-right: 0; overflow: hidden; }
table { border-collapse: collapse; table-layout: fixed; font-size: 12px; }
.mt { width: 1159px; }
.m1{width:35px}.m2{width:125px}.m3{width:39px}.m4{width:228px}.m5{width:79px}.m6{width:42px}.m7{width:82px}.m8{width:40px}.m9{width:58px}.m10{width:75px}.m11{width:75px}.m12{width:81px}.m13{width:81px}.m14{width:119px}
.mt th { background: #f0f0f0; border: 1px solid #c0c0c0; border-top: 0; font-weight: 400; padding: 0; white-space: nowrap; overflow: hidden; }
.mt td { border: 1px solid #c0c0c0; border-top: 0; padding: 1px 4px 0 3px; background: #fff; }
.h21 { height: 21px; } .h19 { height: 19px; } .h20 { height: 20px; } .h89 { height: 89px; } .h101 { height: 101px; }
.mt .orange, .dt .orange { background: linear-gradient(#fbdca6, #f1bd62); }
.mt .pale td { background: #e0f3fe; }
.mt .blue td { background: #a8daf9; }
td.n { text-align: right; font: 11px/14px "Liberation Mono", monospace; letter-spacing: -.6px; white-space: nowrap; overflow: hidden; }
td.r { text-align: right; font-size: 12px; white-space: nowrap; padding-right: 5px; }
.main-vs { width: 19px; height: 334px; padding-top: 8px; margin-left: 1px; }
.main-vs .ar-d { margin-top: auto; margin-bottom: 7px; }
.main-hs { height: 18px; width: 1160px; }
.main-hs .ar-r { margin-left: auto; margin-right: 4px; }
.lower { border-top: 1px solid #a8a8a8; height: 249px; display: flex; flex: none; border-bottom: 0; }
.lower-left { width: 1050px; flex: none; display: flex; flex-direction: column; }
.ltabs { height: 31px; display: flex; justify-content: flex-end; padding: 8px 164px 0 0; flex: none; }
.ltab { border-right: 1px solid #999; height: 19px; line-height: 19px; padding-right: 11px; white-space: nowrap; font-size: 12px; }
.ltable { flex: 1; background: #fff; border: 1px solid #a0a0a0; border-bottom: 0; overflow: hidden; }
.lt-t { width: 1049px; }
.l1{width:770px}.l2{width:101px}.l3{width:81px}.l4{width:57px}.l5{width:40px}
.lt-t th { height: 21px; background: #f0f0f0; border: 1px solid #c0c0c0; border-top: 0; font-weight: 400; padding: 1px 0 0; white-space: nowrap; overflow: hidden; }
.lt-t th.ralign { text-align: right; padding-right: 11px; }
.lt-t td { height: 19px; border: 1px solid #c0c0c0; border-top: 0; padding: 0 3px; background: #fff; }
.lt-t tr td:first-child { border-color: transparent; }
td.bl { color: #0000e0; font-weight: 700; }
.cc { text-align: right; padding-right: 4px !important; }
.cm { text-align: center; }
.cb { display: inline-block; width: 13px; height: 13px; border: 1px solid #333; background: #fff; vertical-align: middle; }
.low-hs { border-bottom: 2px solid #a0a0a0; height: 17px; padding-left: 7px; }
.low-hs .ar-r { margin-left: auto; margin-right: 6px; }
.side { width: 129px; flex: none; padding: 34px 0 0 12px; display: flex; flex-direction: column; }
.btn { font: inherit; color: #111; background: #e1e1e1; border: 1px solid #adadad; border-radius: 0; padding: 0; height: 23px; }
.w48 { width: 48px; }
.brow { display: flex; gap: 6px; }
.b2 { margin-top: 6px; }
.dn1 { margin-top: 1px; }
.wide { width: 103px; }
.b3 { margin-top: 5px; }
.b4 { margin-top: 6px; }
.filter { margin: 6px 0 0 -4px; width: 115px; height: 95px; border: 1px solid #d8d8d8; padding: 9px 0 0 0; display: grid; grid-template-columns: 67px 48px; row-gap: 7px; align-content: start; }
.filter legend { padding: 0 2px; margin-left: 5px; font-size: 12px; line-height: 14px; }
.rd { display: flex; align-items: center; height: 16px; gap: 3px; white-space: nowrap; }
.radio { width: 13px; height: 13px; border-radius: 50%; border: 1px solid #333; background: #fff; position: relative; flex: none; display: block; }
.radio.on::after { content: ""; position: absolute; inset: 2px; border-radius: 50%; background: #222; }
.radio.grey { border-color: #aaa; width: 11px; height: 11px; }
.radio.grey.on { border-color: #aaa; }
.up1 { margin-top: -1px; }

/* status + task */
.statusbar { height: 20px; flex: none; display: flex; gap: 2px; border-top: 1px solid #dcdcdc; }
.sc { height: 19px; border: 1px solid #d8d8d8; background: #f4f4f4; white-space: nowrap; padding-left: 1px; line-height: 17px; word-spacing: 5px; }
.s1 { width: 363px; } .s2 { width: 362px; } .s3 { width: 218px; } .s4 { width: 225px; } .s5 { width: 60px; }
.taskbar { height: 40px; flex: none; display: flex; align-items: center; background: #06141c; color: #fff; }
.start { width: 48px; height: 40px; background: #000; display: flex; align-items: center; justify-content: center; flex: none; }
.search { width: 344px; height: 40px; background: #333; display: flex; align-items: center; padding-left: 9px; flex: none; }
.cortana { width: 21px; height: 21px; border: 3px solid #ddd; border-radius: 50%; flex: none; }
.search-text { margin-left: 6px; color: #8d8d8d; font-size: 14px; white-space: nowrap; }
.mic { width: 14px; height: 20px; margin-left: 113px; }
.tk { width: 50px; height: 40px; display: flex; align-items: center; justify-content: center; flex: none; margin-left: -1px; position: relative; }
.tk-a { width: 50px; margin-left: 0; }
.tsep { width: 1px; height: 24px; background: #444; margin: 0 12px 0 11px; flex: none; }
.tk.run::after { content: ""; position: absolute; left: 2px; right: 2px; bottom: 0; height: 2px; background: #76b9ed; }
.tk.act { background: #333; }
.cpu { margin-left: 130px; width: 54px; display: flex; flex-direction: column; align-items: center; white-space: nowrap; line-height: 16px; flex: none; padding-top: 1px; }
.tray { display: flex; align-items: center; margin-left: 16px; position: relative; flex: 1; }
.tr1 { width: 14px; height: 10px; }
.tr2 { width: 18px; height: 16px; margin-left: 8px; }
.tr3 { width: 18px; height: 16px; margin-left: 9px; }
.tr4 { width: 16px; height: 16px; margin-left: 5px; }
.tr5 { width: 24px; height: 14px; margin-left: 9px; }
.zh { margin-left: 6px; font-size: 14px; }
.tr6 { width: 16px; height: 17px; margin-left: 20px; }
.clock { margin-left: 9px; width: 60px; display: flex; flex-direction: column; align-items: center; white-space: nowrap; line-height: 18px; }
.tr7 { width: 16px; height: 16px; margin-left: 30px; }

/* IME floating */
.ime { position: absolute; left: 1182px; top: 701px; width: 184px; height: 27px; display: flex; align-items: flex-end; }
.ime-logo { width: 27px; height: 27px; position: relative; z-index: 1; }
.ime-bar { flex: 1; height: 22px; background: #fff; display: flex; align-items: center; padding-left: 5px; gap: 5px; margin-left: -1px; }
.ime-zh { color: #1373c8; font-size: 14px; font-weight: 700; width: 16px; }
.ime-i { width: 17px; height: 17px; margin-left: 0; }

/* dialog */
.dialog { position: absolute; left: 183px; top: 116px; width: 852px; height: 514px; background: #f0f0f0; border: 1px solid #2b8ade; box-shadow: 0 2px 26px 4px rgba(0,0,0,.42); display: flex; flex-direction: column; }
.dlg-title { height: 29px; background: #fff; display: flex; align-items: center; flex: none; }
.dlg-ic { margin-left: 8px; }
.dlg-name { margin-left: 5px; }
.dlg-ctl { margin-left: auto; display: flex; gap: 33px; margin-right: 16px; }
.dw { width: 12px; height: 12px; }
.dlg-tabs { height: 29px; flex: none; display: flex; align-items: center; padding: 0 1px 4px 8px; border-bottom: 1px solid #b5b5b5; }
.dtab { white-space: nowrap; flex: none; }
.dtab.cur { border: 1px solid #999; border-right-color: #fff; border-bottom-color: #fff; box-shadow: inset 1px 1px 0 #ddd; width: 41px; height: 21px; text-align: center; margin: -2px 0 0 -4px; line-height: 20px; }
.dsep { width: 1px; height: 20px; background: #b5b5b5; margin: -2px 11px 0; flex: none; }
.dsep:nth-child(4) { margin: -2px 6px 0 17px; }
.dsep:nth-child(6) { margin: -2px 10px 0 6px; }
.dbtn { height: 23px; width: 73px; flex: none; align-self: flex-end; margin-bottom: -3px; }
.ins { margin-left: auto; margin-right: 4px; }
.dlg-tabs .btn:last-child { width: 69px; }
.dlg-body { flex: 1; display: flex; min-height: 0; }
.dl { width: 307px; flex: none; display: flex; flex-direction: column; padding-left: 1px; }
.combo { height: 20px; width: 302px; flex: none; border: 1px solid #aaa; background: #f4f4f4; display: flex; align-items: center; padding: 0 5px 0 3px; overflow: hidden; }
.combo-t { width: 280px; overflow: hidden; white-space: nowrap; flex: none; }
.combo .ar-d { margin-left: 7px; width: 7px; height: 7px; border-color: #666; border-width: 1px 0 0 1px; }
.subtabs { display: flex; height: 22px; flex: none; padding-top: 2px; }
.st { width: 55px; height: 18px; margin-top: 1px; background: #eee; border: 1px solid #ddd; text-align: center; white-space: nowrap; line-height: 16px; }
.st.on { width: 63px; height: 20px; margin-top: 0; background: #fff; border-color: #e8e8e8; border-bottom: 0; }
.treebox { margin: 2px 0 0 4px; width: 295px; height: 368px; border: 1px solid #a0a0a0; border-top-width: 2px; border-bottom-width: 2px; flex: none; display: flex; flex-direction: column; background: #f0f0f0; }
.tree-area { flex: 1; display: flex; min-height: 0; }
.tree-clip { width: 276px; flex: none; background: #fff; overflow: hidden; position: relative; padding-top: 2px; }
.vg { position: absolute; border-left: 1px dotted #555; }
.v1 { left: 13px; top: 0; bottom: 0; }
.v2 { left: 32px; top: 18px; bottom: 0; }
.v3 { left: 51px; top: 80px; bottom: 0; }
.v4 { left: 70px; top: 112px; bottom: 0; }
.v5 { left: 89px; top: 124px; height: 80px; }
.v5b { left: 89px; top: 220px; height: 64px; }
.v5c { left: 89px; top: 300px; bottom: 0; }
.tr { height: 16px; line-height: 16px; white-space: nowrap; position: relative; display: flex; align-items: center; }
.tr .ar-d, .tr .ar-r { width: 7px; height: 7px; margin-right: 8px; border-color: #555; border-width: 2px 0 0 2px; }
.tr .ar-r { border-color: #aaa; margin-right: 9px; margin-left: -1px; }
.tr .ar-d { margin-top: -4px; }
.lv1 { padding-left: 28px; }
.lv2 { padding-left: 47px; }
.lv3 { padding-left: 66px; }
.lv4 { padding-left: 100px; }
.leaf3 { padding-left: 81px; }
.lv4::before, .leaf3::before { content: ""; position: absolute; top: 8px; border-top: 1px dotted #555; width: 8px; }
.lv4::before { left: 90px; }
.leaf3::before { left: 71px; }
.trsel { background: #cbe4fb; margin-left: -2px; padding: 0 4px 0 2px; }
.tree-vs { width: 17px; padding-top: 8px; }
.tree-vs .ar-d { margin-top: auto; margin-bottom: 18px; }
.tree-vs .ar-u, .tree-vs .ar-d, .d-vs .ar-u, .d-vs .ar-d { width: 6px; height: 6px; }
.tree-hs { height: 17px; padding-left: 6px; }
.tree-hs .ar-r { margin-left: 35px; }
.radios { display: flex; height: 38px; align-items: center; padding-left: 14px; flex: none; }
.rd2 { display: flex; align-items: center; gap: 8px; width: 64px; white-space: nowrap; }
.dr { flex: 1; display: flex; flex-direction: column; min-width: 0; border-left: 1px solid #a0a0a0; }
.dgrid { height: 435px; flex: none; display: flex; border-top: 1px solid #b5b5b5; }
.dgrid-clip { width: 524px; flex: none; overflow: hidden; background: #fff; }
.dt { width: 524px; }
.d1{width:22px}.d2{width:62px}.d3{width:268px}.d4{width:55px}.d5{width:65px}.d6{width:52px}
.dt thead th { height: 21px; background: #f0f0f0; border: 1px solid #c0c0c0; border-top: 0; font-weight: 400; padding: 0; white-space: nowrap; overflow: hidden; }
.dt tbody th { height: 19px; background: #f0f0f0; border: 1px solid #c0c0c0; font: 11px/14px "Liberation Mono", monospace; letter-spacing: -.6px; padding: 0; }
.dt td { border: 1px solid #c0c0c0; padding: 0 2px; background: #fff; white-space: nowrap; overflow: hidden; }
.dt td.m { font: 11px/14px "Liberation Mono", monospace; letter-spacing: -.6px; }
.dt td.n { padding: 0 3px 0 0; }
.dt td:last-child.n { padding-right: 0; border-right: 0; }
.dt th.clipth { border-right: 0; }
.dt td.nm { white-space: pre; padding-left: 1px; border-left: 2px dotted #555; word-spacing: 2.700px; }
.dt .grab { border-left: 2px dotted #555; }
.cur-row th { background: #fbcf8c !important; }
.cur-row .nm { background: #d8e9f8; }
.clipth { text-align: left; padding-left: 5px !important; }
.d-vs { width: 17px; padding-top: 9px; }
.d-vs .ar-d { margin-top: auto; margin-bottom: 11px; }
.d-hs { height: 18px; width: 541px; padding-left: 9px; }
.d-hs .ar-r { margin-left: auto; margin-right: 34px; }
.resize { position: absolute; right: 3px; bottom: 3px; width: 8px; height: 8px; background: radial-gradient(circle, #aaa 1px, transparent 1.200px) 0 0 / 3px 3px; }

.circles { position: absolute; left: 0; top: 0; pointer-events: none; }
```
